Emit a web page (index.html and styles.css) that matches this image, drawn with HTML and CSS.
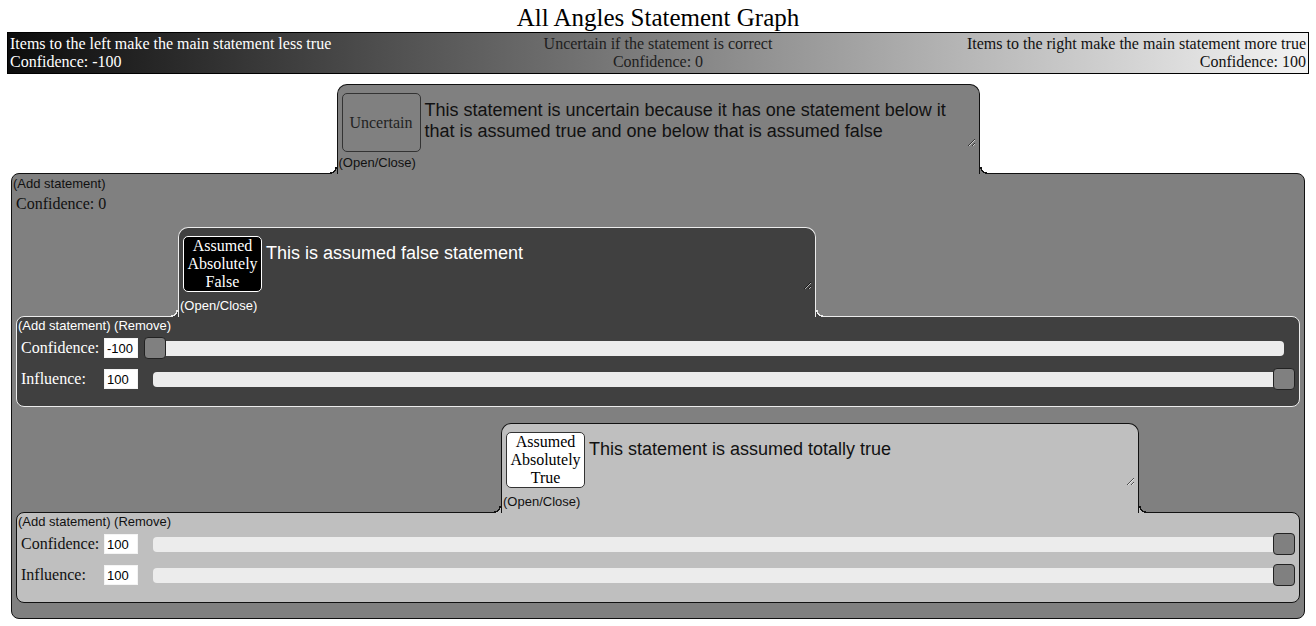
FILE: index.html
```html
<!DOCTYPE html>
<html lang="en">
<head>
<meta charset="utf-8">
<title>All Angles Statement Graph</title>
<link rel="stylesheet" href="styles.css">
</head>
<body>
<h1 class="title">All Angles Statement Graph</h1>
<div class="scale">
  <div class="scale-col scale-left">Items to the left make the main statement less true<br>Confidence: -100</div>
  <div class="scale-col scale-center">Uncertain if the statement is correct<br>Confidence: 0</div>
  <div class="scale-col scale-right">Items to the right make the main statement more true<br>Confidence: 100</div>
</div>
<div class="graph">
  <div class="node theme-mid node-root">
    <div class="tab tab-root">
      <div class="tab-row">
        <button class="verdict verdict-root">Uncertain</button>
        <textarea class="statement">This statement is uncertain because it has one statement below it that is assumed true and one below that is assumed false</textarea>
      </div>
      <span class="toggle">(Open/Close)</span>
    </div>
    <div class="panel panel-root">
      <div class="actions">(Add statement)</div>
      <div class="summary">Confidence:&nbsp;<span>0</span></div>
      <div class="children">
        <div class="node theme-dark">
          <div class="tab tab-child" style="margin-left:162px">
            <div class="tab-row">
              <button class="verdict">Assumed Absolutely False</button>
              <textarea class="statement">This is assumed false statement</textarea>
            </div>
            <span class="toggle">(Open/Close)</span>
          </div>
          <div class="panel panel-child">
            <div class="actions">(Add statement) (Remove)</div>
            <div class="field">
              <label class="field-label">Confidence:</label>
              <input class="num" type="text" value="-100">
              <div class="slider"><div class="track"></div><div class="thumb thumb-min"></div></div>
            </div>
            <div class="field">
              <label class="field-label">Influence:</label>
              <input class="num" type="text" value="100">
              <div class="slider"><div class="track"></div><div class="thumb thumb-max"></div></div>
            </div>
          </div>
        </div>
        <div class="node theme-light node-next">
          <div class="tab tab-child" style="margin-left:485px">
            <div class="tab-row">
              <button class="verdict">Assumed Absolutely True</button>
              <textarea class="statement">This statement is assumed totally true</textarea>
            </div>
            <span class="toggle">(Open/Close)</span>
          </div>
          <div class="panel panel-child">
            <div class="actions">(Add statement) (Remove)</div>
            <div class="field">
              <label class="field-label">Confidence:</label>
              <input class="num" type="text" value="100">
              <div class="slider"><div class="track"></div><div class="thumb thumb-max"></div></div>
            </div>
            <div class="field">
              <label class="field-label">Influence:</label>
              <input class="num" type="text" value="100">
              <div class="slider"><div class="track"></div><div class="thumb thumb-max"></div></div>
            </div>
          </div>
        </div>
      </div>
    </div>
  </div>
</div>
</body>
</html>
```
FILE: styles.css
```css
* { box-sizing: border-box; }

body {
  margin: 0;
  padding: 0 7px;
  background: #fff;
  font-family: "Liberation Serif", "Times New Roman", serif;
  color: #111;
}

.title {
  margin: 0;
  padding-top: 4px;
  font-size: 25px;
  line-height: 28px;
  font-weight: normal;
  text-align: center;
  color: #000;
}

.scale {
  display: flex;
  border: 1px solid #000;
  padding: 2px;
  background: linear-gradient(to right, #0c0c0c, #f3f3f3);
  font-size: 16px;
  line-height: 18px;
}

.scale-col { flex: 1 1 0; white-space: nowrap; }
.scale-left { color: #fff; text-align: left; }
.scale-center { color: #1e1e1e; text-align: center; }
.scale-right { color: #111; text-align: right; }

.graph {
  padding: 10px 4px 0;
}

.node { display: flex; flex-direction: column; }
.node-next { margin-top: 16px; }

/* statement tab */
.tab {
  position: relative;
  z-index: 1;
  height: 90px;
  margin-bottom: -1px;
  padding: 8px 3px 0 0;
  border: 1px solid var(--bd);
  border-bottom: none;
  border-radius: 10px 10px 0 0;
  background: var(--bg);
  color: var(--fg);
}
.tab-root { width: 643px; align-self: center; }
.tab-child { width: 638px; }

/* concave flare where the tab meets the panel border */
.tab::before,
.tab::after {
  content: "";
  position: absolute;
  bottom: 0;
  width: 7px;
  height: 7px;
}
.tab::before {
  left: -8px;
  background: radial-gradient(circle at 0 0, var(--outer) 5.5px, var(--bd) 5.5px, var(--bd) 6.8px, var(--bg) 6.8px);
}
.tab::after {
  right: -8px;
  background: radial-gradient(circle at 100% 0, var(--outer) 5.5px, var(--bd) 5.5px, var(--bd) 6.8px, var(--bg) 6.8px);
}

.tab-row {
  display: flex;
  align-items: flex-start;
  height: 62px;
}

.verdict {
  flex: none;
  width: 79px;
  height: 56px;
  margin: 0 0 0 4px;
  padding: 0 2px;
  border: 1px solid;
  border-radius: 5px;
  display: flex;
  align-items: center;
  justify-content: center;
  text-align: center;
  font-family: "Liberation Serif", "Times New Roman", serif;
  font-size: 16px;
  line-height: 18px;
}
.verdict-root { height: 59px; }

.statement {
  flex: 1;
  height: 54px;
  margin: 0 0 0 2px;
  padding: 7px 3px 0 2px;
  border: none;
  outline: none;
  background: transparent;
  color: var(--fg);
  font-family: "Liberation Sans", Arial, sans-serif;
  font-size: 18px;
  line-height: 21px;
  resize: vertical;
  overflow: hidden;
}

.toggle {
  display: block;
  padding-left: 1px;
  font-family: "Liberation Sans", Arial, sans-serif;
  font-size: 13px;
  line-height: 15px;
}

/* panel */
.panel {
  border: 1px solid var(--bd);
  border-radius: 8px;
  background: var(--bg);
  color: var(--fg);
}
.panel-root { padding: 2px 0 15px 1px; }
.panel-child { padding: 1px 4px 16px 1px; }

.actions {
  font-family: "Liberation Sans", Arial, sans-serif;
  font-size: 13px;
  line-height: 16px;
}

.summary {
  margin-top: 3px;
  padding-left: 3px;
  font-size: 16px;
  line-height: 18px;
}

.children {
  margin-top: 14px;
  padding: 0 4px 0 3px;
}

.field {
  display: flex;
  align-items: center;
  height: 22px;
  margin-top: 3px;
  padding-left: 3px;
}
.field + .field { margin-top: 9px; }

.field-label {
  flex: none;
  width: 83px;
  font-size: 16px;
  line-height: 18px;
}

.num {
  flex: none;
  width: 34px;
  height: 20px;
  margin: 0 6px 0 0;
  padding: 0 2px;
  border: 1px solid #f4f4f4;
  background: #fff;
  color: #000;
  font-family: "Liberation Sans", Arial, sans-serif;
  font-size: 13px;
}

.slider {
  position: relative;
  flex: 1;
  height: 22px;
}
.track {
  height: 15px;
  margin: 4px 11px 0 9px;
  border-radius: 4px;
  background: #ececec;
}
.thumb {
  position: absolute;
  top: 0;
  width: 22px;
  height: 22px;
  border: 1px solid #222;
  border-radius: 4px;
  background: #808080;
}
.thumb-min { left: 0; }
.thumb-max { right: 0; }

/* themes */
.theme-mid { --bg: #808080; --bd: #111; --fg: #111; --outer: #fff; }
.theme-dark { --bg: #404040; --bd: #ececec; --fg: #fff; --outer: #808080; }
.theme-light { --bg: #bfbfbf; --bd: #111; --fg: #111; --outer: #808080; }

.theme-mid > .tab .verdict { background: #808080; border-color: #333; color: #222; }
.theme-dark > .tab .verdict { background: #000; border-color: #fff; color: #fff; }
.theme-light > .tab .verdict { background: #fff; border-color: #333; color: #000; }
```
